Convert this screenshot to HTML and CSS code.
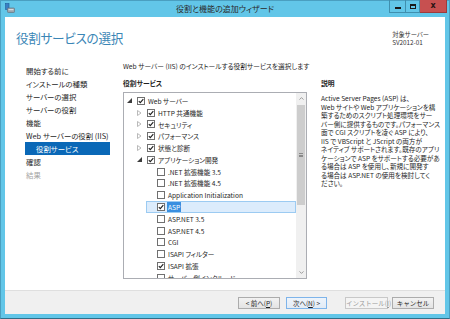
FILE: index.html
```html
<!DOCTYPE html>
<html lang="ja">
<head>
    <meta charset="UTF-8">
    <title>役割と機能の追加ウィザード</title>
    <link rel="stylesheet" href="styles.css">
</head>
<body>
    <div class="window">
        <div class="titlebar">
            <div class="tb-left">
                <svg class="app-icon" width="10" height="10" viewBox="0 0 10 10">
                    <rect x="0.5" y="0.5" width="3.5" height="6" fill="#3b7fc4" stroke="#1f5e9c" stroke-width="0.6"/>
                    <rect x="2.5" y="5" width="7" height="4.5" rx="0.8" fill="#9aa4ad" stroke="#5f6b75" stroke-width="0.6"/>
                    <rect x="3.5" y="6.2" width="5" height="1" fill="#e6e9ec"/>
                </svg>
            </div>
            <div class="tb-title">役割と機能の追加ウィザード</div>
            <div class="tb-controls">
                <span class="ctl ctl-min"><span class="glyph-min"></span></span>
                <span class="ctl ctl-max"><span class="glyph-max"></span></span>
                <span class="ctl ctl-close">x</span>
            </div>
        </div>

        <div class="client">
            <div class="header">
                <h1 class="page-title">役割サービスの選択</h1>
                <div class="target">
                    <div>対象サーバー</div>
                    <div>SV2012-01</div>
                </div>
            </div>

            <div class="main">
                <ul class="nav">
                    <li>開始する前に</li>
                    <li>インストールの種類</li>
                    <li>サーバーの選択</li>
                    <li>サーバーの役割</li>
                    <li>機能</li>
                    <li>Web サーバーの役割 (IIS)</li>
                    <li class="active">役割サービス</li>
                    <li>確認</li>
                    <li class="disabled">結果</li>
                </ul>

                <div class="content">
                    <p class="intro">Web サーバー (IIS) のインストールする役割サービスを選択します</p>
                    <h2 class="section-label">役割サービス</h2>
                    <div class="tree">
                        <div class="tree-rows">
                            <div class="row lv0">
                                <span class="exp"><svg width="5" height="5" viewBox="0 0 5 5"><polygon points="5,0 5,5 0,5" fill="#3c3c3c"/></svg></span>
                                <span class="cb"><svg width="8" height="8" viewBox="0 0 8 8"><rect x="0.5" y="0.5" width="7" height="7" fill="#fff" stroke="#707070"/><path d="M1.8 4.1 L3.3 5.7 L6.3 2.1" fill="none" stroke="#1e1e1e" stroke-width="1.1"/></svg></span>
                                <span class="label">Web サーバー</span>
                            </div>
                            <div class="row lv1">
                                <span class="exp"><svg width="5" height="6" viewBox="0 0 5 6"><polygon points="0.5,0.5 4,3 0.5,5.5" fill="none" stroke="#a8a8a8" stroke-width="0.8"/></svg></span>
                                <span class="cb"><svg width="8" height="8" viewBox="0 0 8 8"><rect x="0.5" y="0.5" width="7" height="7" fill="#fff" stroke="#707070"/><path d="M1.8 4.1 L3.3 5.7 L6.3 2.1" fill="none" stroke="#1e1e1e" stroke-width="1.1"/></svg></span>
                                <span class="label">HTTP 共通機能</span>
                            </div>
                            <div class="row lv1">
                                <span class="exp"><svg width="5" height="6" viewBox="0 0 5 6"><polygon points="0.5,0.5 4,3 0.5,5.5" fill="none" stroke="#a8a8a8" stroke-width="0.8"/></svg></span>
                                <span class="cb"><svg width="8" height="8" viewBox="0 0 8 8"><rect x="0.5" y="0.5" width="7" height="7" fill="#fff" stroke="#707070"/><path d="M1.8 4.1 L3.3 5.7 L6.3 2.1" fill="none" stroke="#1e1e1e" stroke-width="1.1"/></svg></span>
                                <span class="label">セキュリティ</span>
                            </div>
                            <div class="row lv1">
                                <span class="exp"><svg width="5" height="6" viewBox="0 0 5 6"><polygon points="0.5,0.5 4,3 0.5,5.5" fill="none" stroke="#a8a8a8" stroke-width="0.8"/></svg></span>
                                <span class="cb"><svg width="8" height="8" viewBox="0 0 8 8"><rect x="0.5" y="0.5" width="7" height="7" fill="#fff" stroke="#707070"/><path d="M1.8 4.1 L3.3 5.7 L6.3 2.1" fill="none" stroke="#1e1e1e" stroke-width="1.1"/></svg></span>
                                <span class="label">パフォーマンス</span>
                            </div>
                            <div class="row lv1">
                                <span class="exp"><svg width="5" height="6" viewBox="0 0 5 6"><polygon points="0.5,0.5 4,3 0.5,5.5" fill="none" stroke="#a8a8a8" stroke-width="0.8"/></svg></span>
                                <span class="cb"><svg width="8" height="8" viewBox="0 0 8 8"><rect x="0.5" y="0.5" width="7" height="7" fill="#fff" stroke="#707070"/><path d="M1.8 4.1 L3.3 5.7 L6.3 2.1" fill="none" stroke="#1e1e1e" stroke-width="1.1"/></svg></span>
                                <span class="label">状態と診断</span>
                            </div>
                            <div class="row lv1">
                                <span class="exp"><svg width="5" height="5" viewBox="0 0 5 5"><polygon points="5,0 5,5 0,5" fill="#3c3c3c"/></svg></span>
                                <span class="cb"><svg width="8" height="8" viewBox="0 0 8 8"><rect x="0.5" y="0.5" width="7" height="7" fill="#fff" stroke="#707070"/><path d="M1.8 4.1 L3.3 5.7 L6.3 2.1" fill="none" stroke="#1e1e1e" stroke-width="1.1"/></svg></span>
                                <span class="label">アプリケーション開発</span>
                            </div>
                            <div class="row lv2">
                                <span class="exp"></span>
                                <span class="cb"><svg width="8" height="8" viewBox="0 0 8 8"><rect x="0.5" y="0.5" width="7" height="7" fill="#fff" stroke="#707070"/></svg></span>
                                <span class="label">.NET 拡張機能 3.5</span>
                            </div>
                            <div class="row lv2">
                                <span class="exp"></span>
                                <span class="cb"><svg width="8" height="8" viewBox="0 0 8 8"><rect x="0.5" y="0.5" width="7" height="7" fill="#fff" stroke="#707070"/></svg></span>
                                <span class="label">.NET 拡張機能 4.5</span>
                            </div>
                            <div class="row lv2">
                                <span class="exp"></span>
                                <span class="cb"><svg width="8" height="8" viewBox="0 0 8 8"><rect x="0.5" y="0.5" width="7" height="7" fill="#fff" stroke="#707070"/></svg></span>
                                <span class="label">Application Initialization</span>
                            </div>
                            <div class="row lv2 selected">
                                <span class="exp"></span>
                                <span class="cb"><svg width="8" height="8" viewBox="0 0 8 8"><rect x="0.5" y="0.5" width="7" height="7" fill="#fff" stroke="#707070"/><path d="M1.8 4.1 L3.3 5.7 L6.3 2.1" fill="none" stroke="#1e1e1e" stroke-width="1.1"/></svg></span>
                                <span class="label">ASP</span>
                            </div>
                            <div class="row lv2">
                                <span class="exp"></span>
                                <span class="cb"><svg width="8" height="8" viewBox="0 0 8 8"><rect x="0.5" y="0.5" width="7" height="7" fill="#fff" stroke="#707070"/></svg></span>
                                <span class="label">ASP.NET 3.5</span>
                            </div>
                            <div class="row lv2">
                                <span class="exp"></span>
                                <span class="cb"><svg width="8" height="8" viewBox="0 0 8 8"><rect x="0.5" y="0.5" width="7" height="7" fill="#fff" stroke="#707070"/></svg></span>
                                <span class="label">ASP.NET 4.5</span>
                            </div>
                            <div class="row lv2">
                                <span class="exp"></span>
                                <span class="cb"><svg width="8" height="8" viewBox="0 0 8 8"><rect x="0.5" y="0.5" width="7" height="7" fill="#fff" stroke="#707070"/></svg></span>
                                <span class="label">CGI</span>
                            </div>
                            <div class="row lv2">
                                <span class="exp"></span>
                                <span class="cb"><svg width="8" height="8" viewBox="0 0 8 8"><rect x="0.5" y="0.5" width="7" height="7" fill="#fff" stroke="#707070"/></svg></span>
                                <span class="label">ISAPI フィルター</span>
                            </div>
                            <div class="row lv2">
                                <span class="exp"></span>
                                <span class="cb"><svg width="8" height="8" viewBox="0 0 8 8"><rect x="0.5" y="0.5" width="7" height="7" fill="#fff" stroke="#707070"/><path d="M1.8 4.1 L3.3 5.7 L6.3 2.1" fill="none" stroke="#1e1e1e" stroke-width="1.1"/></svg></span>
                                <span class="label">ISAPI 拡張</span>
                            </div>
                            <div class="row lv2">
                                <span class="exp"></span>
                                <span class="cb"><svg width="8" height="8" viewBox="0 0 8 8"><rect x="0.5" y="0.5" width="7" height="7" fill="#fff" stroke="#707070"/></svg></span>
                                <span class="label">サーバー側インクルード</span>
                            </div>
                        </div>
                        <div class="scrollbar">
                            <div class="sb-arrow">
                                <svg width="5" height="3" viewBox="0 0 5 3"><path d="M0.5 2.6 L2.5 0.6 L4.5 2.6" fill="none" stroke="#868686" stroke-width="0.8"/></svg>
                            </div>
                            <div class="sb-track">
                                <div class="sb-thumb">
                                    <span class="grip"></span>
                                </div>
                            </div>
                            <div class="sb-arrow">
                                <svg width="5" height="3" viewBox="0 0 5 3"><path d="M0.5 0.4 L2.5 2.4 L4.5 0.4" fill="none" stroke="#868686" stroke-width="0.8"/></svg>
                            </div>
                        </div>
                    </div>
                </div>

                <div class="desc">
                    <h2 class="section-label">説明</h2>
                    <p class="desc-text">Active Server Pages (ASP) は、<br>Web サイトや Web アプリケーションを構<br>築するためのスクリプト処理環境をサー<br>バー側に提供するものです。パフォーマンス<br>面で CGI スクリプトを凌ぐ ASP により、<br>IIS で VBScript と JScript の両方が<br>ネイティブ サポートされます。既存のアプリ<br>ケーションで ASP をサポートする必要があ<br>る場合は ASP を使用し、新規に開発す<br>る場合は ASP.NET の使用を検討してく<br>ださい。</p>
                </div>
            </div>

            <div class="footer">
                <button class="btn btn-prev">&lt; 前へ(<u>P</u>)</button>
                <button class="btn btn-next btn-default">次へ(<u>N</u>) &gt;</button>
                <button class="btn btn-install" disabled>インストール(<u>I</u>)</button>
                <button class="btn btn-cancel">キャンセル</button>
            </div>
        </div>
    </div>
</body>
</html>
```

FILE: styles.css
```css
* {
    box-sizing: border-box;
    margin: 0;
    padding: 0;
}

html, body {
    width: 450px;
    height: 319px;
    overflow: hidden;
}

body {
    font-family: "Noto Sans CJK JP", "Noto Sans", sans-serif;
    font-feature-settings: "palt";
    color: #1e1e1e;
    background: #62c6e8;
}

.window {
    width: 450px;
    height: 319px;
    background: #62c6e8;
    border: 1px solid #4a9fc0;
    border-bottom-color: #2f6f88;
    display: flex;
    flex-direction: column;
}

/* title bar */
.titlebar {
    height: 16px;
    display: grid;
    grid-template-columns: 1fr auto 1fr;
    align-items: start;
}

.tb-left {
    padding: 2px 0 0 4px;
}

.app-icon {
    display: block;
}

.tb-title {
    font-size: 8px;
    line-height: 16px;
    color: #2a2a2a;
    white-space: nowrap;
}

.tb-controls {
    display: flex;
    justify-content: flex-end;
    margin-right: 2px;
    margin-top: -1px;
}

.ctl {
    height: 13px;
    display: flex;
    align-items: center;
    justify-content: center;
    border: 1px solid #3f8fae;
    border-top: none;
}

.ctl-min {
    width: 16px;
    border-right: none;
}

.ctl-max {
    width: 15px;
}

.ctl-close {
    width: 27px;
    background: #c75050;
    border-color: #9e3b3b;
    border-left: none;
    font-family: "DejaVu Sans", sans-serif;
    font-size: 8px;
    font-weight: bold;
    color: #2a1414;
    line-height: 1;
    padding-bottom: 1px;
}

.glyph-min {
    width: 6px;
    height: 2px;
    background: #1a1a1a;
    margin-top: 4px;
}

.glyph-max {
    width: 6px;
    height: 5px;
    border: 1px solid #1a1a1a;
    border-top-width: 2px;
}

/* client area */
.client {
    flex: 1;
    margin: 0 4px 4px;
    background: #ffffff;
    display: flex;
    flex-direction: column;
}

.header {
    height: 40px;
    display: flex;
    justify-content: space-between;
    align-items: flex-start;
}

.page-title {
    font-size: 12.6px;
    font-weight: normal;
    line-height: 17px;
    letter-spacing: -0.3px;
    color: #3a86b6;
    padding: 12px 0 0 11px;
    white-space: nowrap;
}

.target {
    font-size: 6.3px;
    line-height: 8px;
    color: #333;
    padding-top: 14px;
    margin-right: 16px;
}

.main {
    flex: 1;
    display: flex;
    min-height: 0;
}

/* left navigation */
.nav {
    list-style: none;
    width: 118px;
    padding-top: 7px;
    font-size: 7.4px;
}

.nav li {
    height: 13px;
    line-height: 13px;
    padding-left: 21px;
    white-space: nowrap;
}

.nav li.active {
    margin-left: 20px;
    width: 85px;
    padding-left: 11px;
    background: #0a68b7;
    color: #ffffff;
}

.nav li.disabled {
    color: #a6a6a6;
}

/* main column */
.content {
    width: 184px;
    padding-top: 4px;
}

.intro {
    font-size: 6.7px;
    line-height: 10px;
    white-space: nowrap;
    margin-bottom: 7px;
}

.section-label {
    font-size: 6.8px;
    font-weight: bold;
    line-height: 10px;
    margin-bottom: 4px;
}

.tree {
    height: 187px;
    border: 1px solid #abadb3;
    display: flex;
    overflow: hidden;
}

.tree-rows {
    flex: 1;
    padding: 2px 0 0 2px;
    overflow: hidden;
}

.row {
    height: 11.8px;
    display: flex;
    align-items: center;
    border: 1px solid transparent;
    font-size: 6.6px;
    white-space: nowrap;
}

.row.lv1 {
    margin-left: 10px;
}

.row.lv2 {
    margin-left: 20px;
}

.row.selected {
    background: #dcecfc;
    border-color: #9ccbf2;
}

.row.selected .label {
    background: #3a8fe0;
    color: #ffffff;
    padding: 0 1px;
    margin-left: -1px;
}

.exp {
    width: 10px;
    height: 6px;
    display: flex;
    align-items: center;
}

.exp svg {
    display: block;
}

.cb {
    width: 8px;
    height: 8px;
    margin-right: 3px;
}

.cb svg {
    display: block;
}

.scrollbar {
    width: 10px;
    background: #f0f0f0;
    display: flex;
    flex-direction: column;
}

.sb-arrow {
    height: 11px;
    display: flex;
    align-items: center;
    justify-content: center;
}

.sb-track {
    flex: 1;
    padding: 1px 1px 0;
}

.sb-thumb {
    height: 100px;
    background: #cdcdcd;
    display: flex;
    align-items: center;
    justify-content: center;
}

.grip {
    width: 4px;
    height: 4px;
    border-top: 1px solid #8a8a8a;
    border-bottom: 1px solid #8a8a8a;
    position: relative;
}

.grip::after {
    content: '';
    position: absolute;
    left: 0;
    right: 0;
    top: 0.5px;
    border-top: 1px solid #8a8a8a;
}

/* description column */
.desc {
    width: 124px;
    margin-left: 14px;
    padding-top: 21px;
}

.desc .section-label {
    margin-bottom: 6px;
}

.desc-text {
    font-size: 6.6px;
    line-height: 8.5px;
    white-space: nowrap;
}

/* footer */
.footer {
    height: 24px;
    background: #f0f0f0;
    border-top: 1px solid #dfdfdf;
    display: flex;
    justify-content: flex-end;
    align-items: flex-start;
    padding: 6px 11px 0 0;
}

.btn {
    height: 12px;
    font-family: inherit;
    font-size: 6.5px;
    line-height: 10px;
    color: #1e1e1e;
    background: linear-gradient(#f2f2f2, #e3e3e3);
    border: 1px solid #acacac;
    white-space: nowrap;
}

.btn u {
    text-decoration: underline;
}

.btn-prev {
    width: 42px;
    margin-right: 6px;
}

.btn-next {
    width: 41px;
    margin-right: 18px;
}

.btn-default {
    border-color: #7eb4ea;
    background: linear-gradient(#eef4fb, #e2ebf5);
}

.btn-install {
    width: 43px;
    margin-right: 4px;
}

.btn:disabled {
    background: #f4f4f4;
    border-color: #c8c8c8;
    color: #9a9a9a;
}

.btn-cancel {
    width: 42px;
}
```
